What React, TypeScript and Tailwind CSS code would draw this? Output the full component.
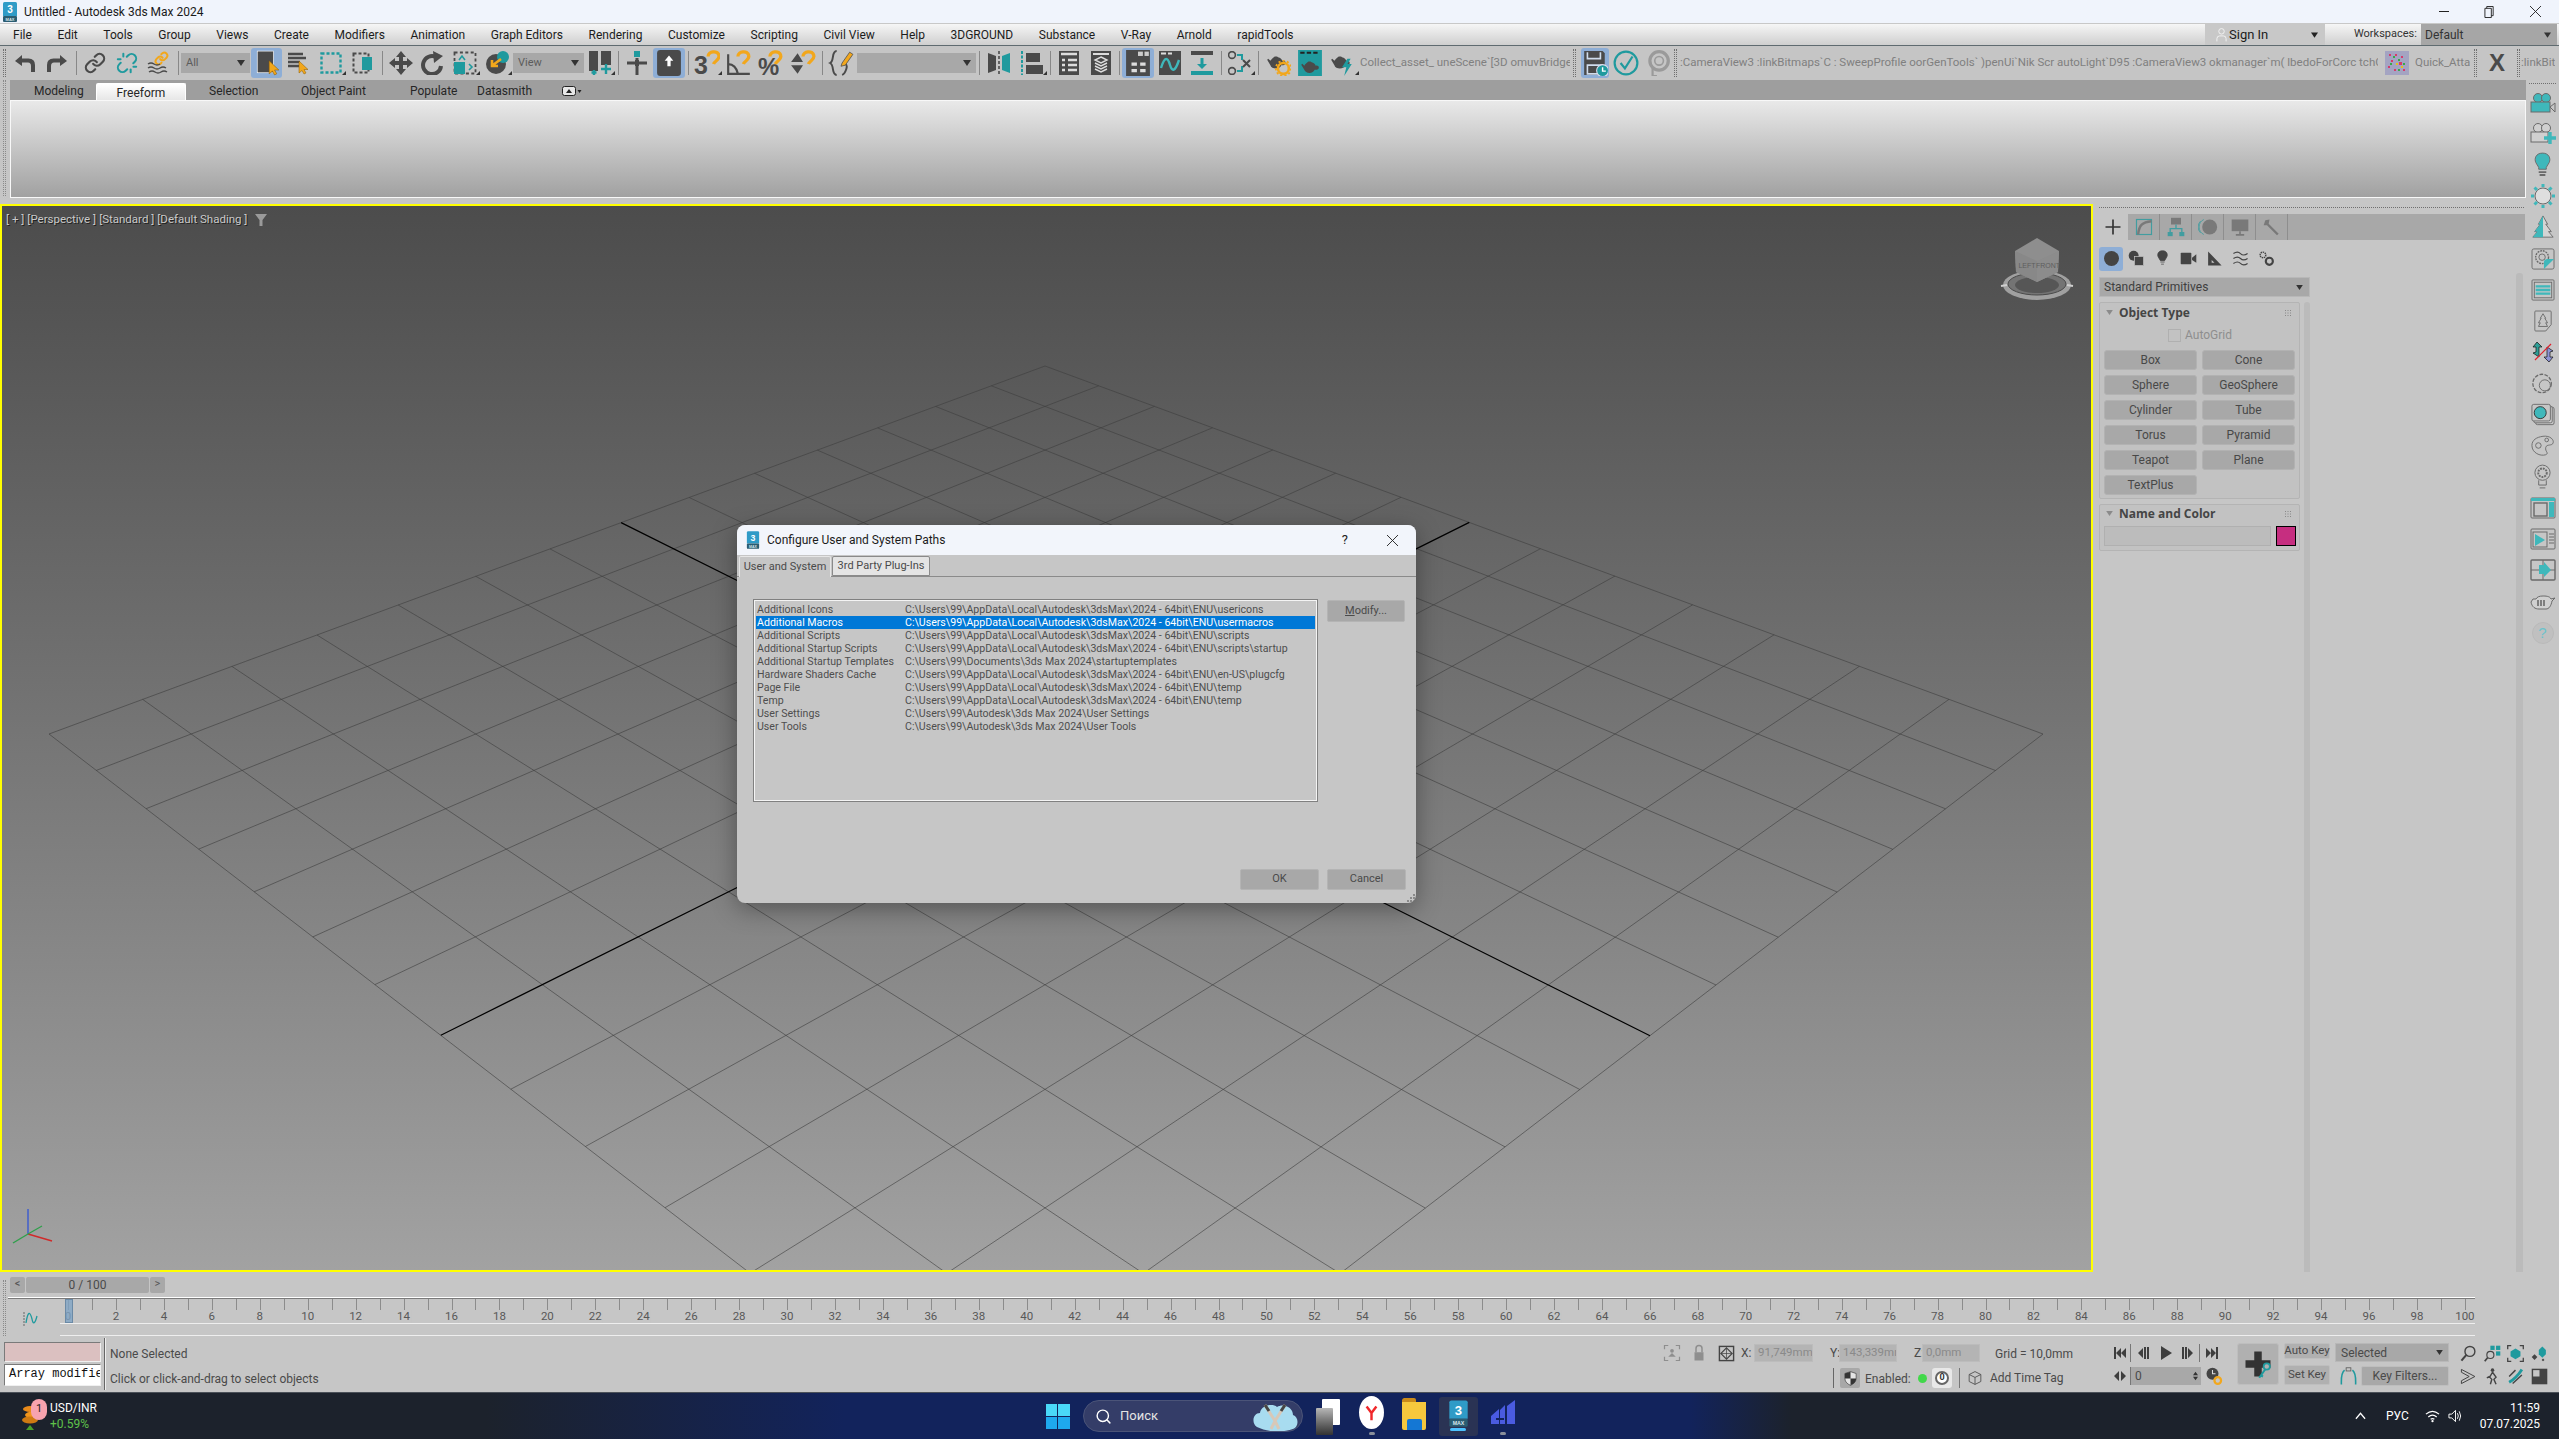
import React from "react";
import { Link, Unlink, Search } from "lucide-react";

const D = "#4a4a4a", T = "#1f9a9e", O = "#f2a71c", L = "#3fb8bb", G = "#6a6a6a";

const Ic = ({ children, c = "w-6 h-6" }: { children: React.ReactNode; c?: string }) => (
  <svg viewBox="0 0 24 24" className={c} fill="none">{children}</svg>
);
const Cursor = ({ x = 13, y = 11 }: { x?: number; y?: number }) => (
  <path transform={`translate(${x} ${y})`} d="M0 0 L0 12 L3 9.5 L5 13 L7 12 L5 8.5 L9 8.5 Z" fill={O} stroke="#8a5a00" strokeWidth=".5" />
);
const Magnet = ({ x = 11, y = 0 }: { x?: number; y?: number }) => (
  <path transform={`translate(${x} ${y})`} d="M1 6 C1 1 10 0 11 5 C12 9 7 10 6 13" stroke={O} strokeWidth="3" />
);
const Teapot = ({ f = D }: { f?: string }) => (
  <path d="M5 10 L3 8 L2 9 L5 14 C6 18 14 18 15 14 L17 14 C20 14 20 9 16 10 C15 7 12 7 11 6 L9 6 C8 7 6 8 5 10Z" fill={f} />
);

const toolbarIcons: Record<string, React.ReactNode> = {
  undo: <Ic><path d="M9 4 L2 10 L9 15 V11.5 H15 Q18 11.5 18 15 V21 H22 V14 Q22 7.5 15.5 7.5 H9Z" fill={D} /></Ic>,
  redo: <Ic c="w-6 h-6 -scale-x-100"><path d="M9 4 L2 10 L9 15 V11.5 H15 Q18 11.5 18 15 V21 H22 V14 Q22 7.5 15.5 7.5 H9Z" fill={D} /></Ic>,
  link: <Link className="w-[22px] h-[22px] text-[#4a4a4a]" strokeWidth={2.4} />,
  unlink: <Unlink className="w-[22px] h-[22px] text-[#1f9a9e]" strokeWidth={2.2} />,
  bind: <Ic><g transform="translate(7 0) scale(.62)" stroke={O} strokeWidth="3.2" strokeLinecap="round"><path d="M10 13a5 5 0 0 0 7.5.5l3-3a5 5 0 0 0-7-7l-1.7 1.7" /><path d="M14 11a5 5 0 0 0-7.5-.5l-3 3a5 5 0 0 0 7 7l1.7-1.7" /></g><path d="M1 13 q3-2 6 0 t6 0 M1 17 q3-2 6 0 t6 0 t6 0 M2 21 q3-2 6 0 t6 0 t6 0" stroke={D} strokeWidth="1.5" /></Ic>,
  select: <Ic c="w-[26px] h-[26px]"><rect x="3" y="1" width="15" height="20" fill={D} stroke="#fff" strokeWidth=".6" /><Cursor x={14} y={10} /></Ic>,
  byname: <Ic><path d="M2 3h15M2 7h18M2 11h12M2 15h11" stroke={D} strokeWidth="2.4" /><Cursor x={13} y={10} /></Ic>,
  rect: <Ic><rect x="2.5" y="2.5" width="19" height="19" stroke={T} strokeWidth="2.4" strokeDasharray="3 2" /></Ic>,
  win: <Ic><rect x="2.5" y="2.5" width="15" height="19" stroke={D} strokeWidth="2" strokeDasharray="3 2" /><rect x="11" y="6" width="10" height="13" fill={T} /></Ic>,
  move: <Ic><path d="M12 0 L17 6 H14 V10 H18 V7 L24 12 L18 17 V14 H14 V18 H17 L12 24 L7 18 H10 V14 H6 V17 L0 12 L6 7 V10 H10 V6 H7Z" fill={D} /></Ic>,
  rotate: <Ic><path d="M15 6 A9 9 0 1 0 20 15" stroke={D} strokeWidth="4" /><path d="M12 0 L22 5 L13 12Z" fill={D} /></Ic>,
  scale: <Ic><rect x="1.5" y="1.5" width="21" height="21" stroke={D} strokeWidth="1.8" strokeDasharray="3 2.4" /><rect x="1" y="11" width="11" height="12" fill={T} /><path d="M6 9 L9 5 L12 9 M16 13 L19 16 L16 19" stroke={T} strokeWidth="1.6" /></Ic>,
  place: <Ic><circle cx="11" cy="13" r="10" fill={D} /><circle cx="18" cy="6" r="6" fill={T} /><path d="M16 8 L8 14 M7 9 V15 H13" stroke={O} strokeWidth="2.6" /></Ic>,
  pivot: <Ic><rect x="1" y="0" width="9" height="20" fill={D} /><rect x="13" y="0" width="10" height="14" fill={D} /><path d="M18 13 V23 M13 18 H23 M6 19 V24 M3.5 21.5 H8.5" stroke={T} strokeWidth="2.4" /></Ic>,
  manip: <Ic><rect x="9" y="0" width="6" height="6" fill={T} /><rect x="10" y="9" width="4" height="6" fill={D} /><path d="M2 12 H22 M12 7 V24" stroke={D} strokeWidth="3" /></Ic>,
  up: <Ic c="w-[26px] h-[26px]"><rect x="1" y="0" width="22" height="24" rx="3" fill={D} /><path d="M12 5 L16 10 H13.5 V15 H10.5 V10 H8Z" fill="#fff" /></Ic>,
  s3: <Ic c="w-[26px] h-[26px]"><text x="0" y="22" fontSize="23" fontWeight="700" fontFamily="Liberation Sans" fill={D}>3</text><Magnet x={12} y={0} /></Ic>,
  sa: <Ic c="w-[26px] h-[26px]"><path d="M2 4 V22 H22 M2 13 Q9 13 11 22" stroke={D} strokeWidth="2" /><Magnet x={10} y={0} /></Ic>,
  sp: <Ic c="w-[26px] h-[26px]"><text x="0" y="23" fontSize="22" fontWeight="700" fontFamily="Liberation Sans" fill={D}>%</text><Magnet x={10} y={0} /></Ic>,
  ss: <Ic c="w-[26px] h-[26px]"><path d="M1 11 L7 3 L12 11Z M1 14 H12 L7 22Z" fill={D} /><Magnet x={11} y={0} /></Ic>,
  curly: <Ic c="w-[26px] h-[26px]"><path d="M8 1 C3 1 6 10 2 12 C6 14 3 23 8 23 M16 13 C19 14 16 22 13 23" stroke={D} strokeWidth="1.8" /><path d="M13 12 L20 2 L23 4 L16 14 L12 15Z" fill={O} stroke={D} strokeWidth=".7" /></Ic>,
  mirror: <Ic><path d="M1 2 L9 5 V19 L1 22Z" fill={D} /><path d="M23 2 L15 5 V19 L23 22Z" fill={T} /><path d="M12 0 V24" stroke={D} strokeWidth="1.6" strokeDasharray="3 2" /></Ic>,
  align: <Ic><path d="M2 0 V24" stroke={T} strokeWidth="2" strokeDasharray="3 1.5" /><rect x="6" y="2" width="14" height="9" fill={D} /><rect x="6" y="14" width="17" height="9" fill={D} /></Ic>,
  layer: <Ic><rect x="2" y="0" width="20" height="24" fill={D} /><path d="M4 3 H20 M5 9 H8 M11 9 H20 M5 14 H8 M11 14 H20 M5 19 H8 M11 19 H20" stroke="#ddd" strokeWidth="2.4" /></Ic>,
  scene: <Ic><rect x="2" y="0" width="20" height="24" fill={D} /><path d="M4 3 H20" stroke="#ddd" strokeWidth="2" /><path d="M12 6 L18 9 L12 12 L6 9Z M6 12 L12 15 L18 12 M6 15 L12 18 L18 15 M6 18 L12 21 L18 18" stroke="#ddd" strokeWidth="1.4" /></Ic>,
  hlgrid: <Ic c="w-[26px] h-[26px]"><rect x="1" y="0" width="22" height="24" fill={D} /><rect x="12" y="1.5" width="4.5" height="4" fill="#ccc" /><rect x="18" y="1.5" width="4" height="4" fill="#ccc" /><path d="M6 13 H11 M14 13 H19 M6 19 H11 M14 19 H19" stroke="#ddd" strokeWidth="3" /></Ic>,
  curve: <Ic><rect x="1" y="0" width="22" height="24" fill={D} /><path d="M3 2.5 H8 M10 2.5 H14" stroke="#ddd" strokeWidth="2" /><path d="M3 17 C7 4 10 7 12 14 C14 21 17 21 21 9" stroke={L} strokeWidth="2.4" /></Ic>,
  dl: <Ic><rect x="1" y="0" width="22" height="4" fill={D} /><path d="M12 7 V14" stroke={T} strokeWidth="3" /><path d="M7 13 H17 L12 18Z" fill={T} /><rect x="1" y="20" width="22" height="4" fill={T} /></Ic>,
  nodes: <Ic><circle cx="4" cy="4" r="3.4" stroke={D} strokeWidth="1.6" /><circle cx="4" cy="20" r="3.4" stroke={D} strokeWidth="1.6" /><path d="M9 4 H14 V9 M9 20 H14 V15" stroke={T} strokeWidth="2" /><path d="M15 9 L22 16 M22 9 L15 16" stroke={D} strokeWidth="2" /></Ic>,
  t1: <Ic c="w-[26px] h-[26px]"><Teapot /><circle cx="17" cy="17" r="5" stroke={O} strokeWidth="2.4" /><circle cx="17" cy="17" r="7" stroke={O} strokeWidth="1.6" strokeDasharray="2 2" /></Ic>,
  t2: <Ic c="w-[26px] h-[26px]"><rect x="1" y="0" width="22" height="24" fill={T} /><path d="M3 2.5 H7 M9 2.5 H13 M15 2.5 H19" stroke="#222" strokeWidth="2" /><g transform="translate(2 5) scale(.95)"><Teapot /></g></Ic>,
  t3: <Ic c="w-[26px] h-[26px]"><Teapot /><path d="M17 8 L12 16 H16 L14 24 L21 13 H17 L20 8Z" fill={T} /></Ic>,
  save: <Ic c="w-[26px] h-[26px]"><path d="M2 1 H19 L21 3 V23 H2Z" fill={D} /><path d="M5 2 V8 H17 V2 M5 14 H18 V22 H5Z" stroke="#cfdcec" strokeWidth="1.5" /><circle cx="19" cy="19" r="5.5" fill={T} stroke="#dde" /><path d="M19 16 V19.5 H22" stroke="#fff" strokeWidth="1.3" /></Ic>,
  check: <Ic c="w-[26px] h-[26px]"><circle cx="12" cy="12" r="10.5" stroke={T} strokeWidth="2" /><path d="M7 12 L11 17 L18 6" stroke={T} strokeWidth="2" /></Ic>,
  clock: <Ic c="w-[26px] h-[26px]"><circle cx="13" cy="10" r="8.5" stroke="#9a9a9a" strokeWidth="3" /><circle cx="13" cy="10" r="4" stroke="#9a9a9a" strokeWidth="1.5" /><path d="M7 16 V24 H11" stroke="#9a9a9a" strokeWidth="2" /></Ic>,
};

const Flyout = () => (
  <svg viewBox="0 0 4 4" className="absolute right-[1px] bottom-[3px] w-1 h-1"><path d="M4 0 V4 H0Z" fill="#333" /></svg>
);
const Btn = ({ n, fly, hl, w }: { n: string; fly?: boolean; hl?: boolean; w?: string }) => (
  <div className={`relative flex items-center justify-center shrink-0 h-[30px] ${w ?? "w-8"} ${hl ? "bg-[#8eaed6] rounded-[3px]" : ""}`}>
    {toolbarIcons[n]}
    {fly && <Flyout />}
  </div>
);
const Sep = ({ w = "w-[6px]" }: { w?: string }) => (
  <div className={`flex justify-center shrink-0 ${w}`}><div className="w-px h-[24px] bg-[#888888]" /></div>
);
const Dots = () => <div className="w-[3px] h-[28px] border-x border-dotted border-[#6f6f6f] shrink-0" />;
const Combo = ({ label, w }: { label: string; w: string }) => (
  <div className={`flex items-center justify-between shrink-0 h-[20px] px-[5px] bg-[#a8a8a8] text-[11px] text-[#5c5c5c] ${w}`}>
    <span>{label}</span>
    <svg viewBox="0 0 8 6" className="w-2 h-[6px]"><path d="M0 0 H8 L4 6Z" fill="#333" /></svg>
  </div>
);

const menus = ["File", "Edit", "Tools", "Group", "Views", "Create", "Modifiers", "Animation", "Graph Editors", "Rendering", "Customize", "Scripting", "Civil View", "Help", "3DGROUND", "Substance", "V-Ray", "Arnold", "rapidTools"];

const MaxIcon = ({ c }: { c: string }) => (
  <svg viewBox="0 0 16 20" className={c}>
    <path d="M1 1.5 Q1 0 2.5 0 H13.5 Q15 0 15 1.5 V14 H1Z" fill="#2f9bc7" />
    <rect x="1" y="14" width="14" height="6" rx="1" fill="#2b5d72" />
    <text x="8" y="11" textAnchor="middle" fontSize="10" fontWeight="700" fontFamily="Liberation Sans" fill="#fff">3</text>
    <text x="8" y="18.6" textAnchor="middle" fontSize="4" fontWeight="700" fontFamily="Liberation Sans" fill="#d7e6ee">MAX</text>
  </svg>
);

function TitleBar() {
  return (
    <div className="flex items-center h-[24px] bg-[#f0f4fc] border-b border-[#c8c8c8] text-[12px] text-[#1a1a1a]">
      <MaxIcon c="w-[16px] h-[20px] ml-[2px] mr-[6px]" />
      <span>Untitled - Autodesk 3ds Max 2024</span>
      <div className="ml-auto flex items-center text-[#222222]">
        <span className="w-[46px] flex justify-center"><span className="w-[10px] h-px bg-[#222222]" /></span>
        <svg viewBox="0 0 12 14" className="w-[11px] h-[14px] mx-[17px] mr-[35px]"><path d="M3 3 V1 H10 V11 H8 M1 3 H8 V13 H1Z" fill="none" stroke="#222" /></svg>
        <svg viewBox="0 0 12 12" className="w-[11px] h-[11px] mr-[18px]"><path d="M0 0 L12 12 M12 0 L0 12" stroke="#222" /></svg>
      </div>
    </div>
  );
}

function MenuBar() {
  return (
    <div className="flex items-center h-[22px] bg-gradient-to-b from-[#f6f6f6] to-[#cfcfcf] border-b border-[#5f6b70] text-[12px] text-[#1c1c1c]">
      <div className="flex gap-[25.6px] pl-[13px]">
        {menus.map((m) => <span key={m}>{m}</span>)}
      </div>
      <div className="ml-auto flex items-center h-full">
        <div className="flex items-center w-[120px] h-full bg-[#c8c8c8] relative pl-[11px]">
          <svg viewBox="0 0 12 16" className="w-[11px] h-[16px] mr-[2px]"><circle cx="6" cy="4" r="3" fill="none" stroke="#f4f4f4" /><path d="M1 15 V12 Q1 9 4 9 H8 Q11 9 11 12 V15" fill="none" stroke="#f4f4f4" /></svg>
          <span className="text-[13px]">Sign In</span>
          <svg viewBox="0 0 8 6" className="w-[7px] h-[6px] absolute right-[7px]"><path d="M0 0 H8 L4 6Z" fill="#222" /></svg>
        </div>
        <span className="ml-[29px] w-[62px] whitespace-nowrap text-[11px] text-[#333333]">Workspaces:</span>
        <div className="flex items-center justify-between ml-[5px] mr-[2px] w-[136px] h-full bg-[#a6a6a6] pl-[4px] pr-[6px] text-[12px] text-[#333333]">
          <span>Default</span>
          <svg viewBox="0 0 8 6" className="w-[7px] h-[6px]"><path d="M0 0 H8 L4 6Z" fill="#333" /></svg>
        </div>
      </div>
    </div>
  );
}

function Toolbar() {
  const txt = "shrink-0 overflow-hidden text-[11.5px] text-[#808080]";
  return (
    <div className="flex items-center h-[34px] bg-[#c5c5c5] whitespace-nowrap overflow-hidden">
      <div className="ml-[3px] mr-[3px]"><Dots /></div>
      <Btn n="undo" /><Btn n="redo" /><Sep /><Btn n="link" /><Btn n="unlink" /><Btn n="bind" /><Sep />
      <Combo label="All" w="w-[69px]" />
      <div className="w-px shrink-0" />
      <Btn n="select" hl w="w-[31px]" /><Btn n="byname" /><Btn n="rect" w="w-[33px]" fly /><Btn n="win" /><Sep />
      <Btn n="move" /><Btn n="rotate" /><Btn n="scale" fly /><Btn n="place" fly />
      <Combo label="View" w="w-[71px]" />
      <Btn n="pivot" fly /><Sep w="w-[5px]" /><Btn n="manip" /><Btn n="up" hl /><Sep />
      <Btn n="s3" fly /><Btn n="sa" /><Btn n="sp" /><Btn n="ss" /><Sep /><Btn n="curly" />
      <Combo label="" w="w-[119px]" />
      <Sep w="w-[7px]" /><Btn n="mirror" /><Btn n="align" fly w="w-[33px]" /><Sep w="w-[5px]" /><Btn n="layer" /><Btn n="scene" /><Sep w="w-[5px]" />
      <Btn n="hlgrid" hl /><Btn n="curve" /><Btn n="dl" /><Sep /><Btn n="nodes" fly /><Sep w="w-[5px]" /><Btn n="t1" w="w-[34px]" /><Btn n="t2" w="w-[29px]" /><Btn n="t3" fly w="w-[36px]" />
      <div className={`w-[210px] ${txt}`}>Collect_asset_ uneScene`[3D omuvBridge`T</div>
      <div className="ml-[3px] shrink-0"><Dots /></div>
      <div className="w-[5px] shrink-0" /><Btn n="save" hl w="w-[28px]" /><Btn n="check" w="w-[33px]" /><Btn n="clock" w="w-[32px]" />
      <Dots />
      <div className={`w-[698px] ml-[3px] ${txt}`}>:CameraView3 :linkBitmaps`C : SweepProfile oorGenTools` )penUi`Nik Scr autoLight`D95 :CameraView3 okmanager`m( lbedoForCorc tchGenerator`</div>
      <svg viewBox="0 0 24 24" className="w-[24px] h-[24px] ml-[7px] shrink-0"><rect width="24" height="24" fill="#a4a4c2" /><path d="M4 3h2v2H4zM10 3h2v2h-2zM16 5h2v2h-2zM6 9h2v2H6zM14 11h3v3h-3zM3 15h2v2H3zM9 18h2v2H9zM18 18h2v2h-2z" fill="#d63b6b" /><path d="M8 5h2v2H8zM13 8h2v2h-2zM18 12h2v2h-2zM5 12h2v2H5zM13 18h2v2h-2z" fill="#38a84b" /><path d="M11 12h2v2h-2zM16 15h2v2h-2z" fill="#e5c21b" /></svg>
      <div className={`w-[55px] ml-[6px] ${txt}`}>Quick_Attach</div>
      <div className="ml-[4px] shrink-0"><Dots /></div>
      <div className="w-[40px] shrink-0 flex justify-center text-[24px] leading-none font-bold text-[#4a4a4a] font-['Liberation_Sans']">X</div>
      <Dots />
      <div className={`ml-[1px] ${txt}`}>:linkBit</div>
    </div>
  );
}

function Ribbon() {
  return (
    <div className="relative">
      <div className="flex h-[20px]">
        <div className="w-[10px] bg-[#c5c5c5]" />
        <div className="flex-1 bg-[#9e9e9e] flex items-end text-[12px] text-[#262626]">
          <span className="ml-[24px] w-[62px] h-full pt-[1px] flex items-center">Modeling</span>
          <span className="w-[90px] h-[17px] pt-[1px] flex items-center justify-center bg-gradient-to-b from-[#ffffff] to-[#e6e6e6] border-x border-t border-[#ffffff] rounded-t-[2px]">Freeform</span>
          <span className="ml-[23px] w-[92px] h-full pt-[1px] flex items-center">Selection</span>
          <span className="w-[109px] h-full pt-[1px] flex items-center">Object Paint</span>
          <span className="w-[67px] h-full pt-[1px] flex items-center">Populate</span>
          <span className="w-[85px] h-full pt-[1px] flex items-center">Datasmith</span>
          <span className="h-full pt-[1px] flex items-center">
            <svg viewBox="0 0 20 10" className="w-[20px] h-[10px]"><rect x=".5" y=".5" width="13" height="9" rx="2" fill="#e8e8e8" stroke="#222" /><path d="M7 3 L10 7 H4Z" fill="#222" /><path d="M15.5 4 H19.5 L17.5 7Z" fill="#222" /></svg>
          </span>
        </div>
      </div>
      <div className="flex h-[98px]">
        <div className="w-[10px] bg-[#c5c5c5]" />
        <div className="flex-1 border border-[#f8f8f8] bg-gradient-to-b from-[#e9e9e9] to-[#a1a1a1]" />
      </div>
      <div className="absolute left-[3px] top-[0px] w-[3px] h-[116px] border-x border-dotted border-[#8a8a8a]" />
    </div>
  );
}

function buildGrid() {
  const [x0, y0, x1, y1, x2, y2, x3, y3] = [1045, 366, 2043, 734, 1045, 1500, 49, 734];
  const dx1 = x1 - x2, dx2 = x3 - x2, sx = x0 - x1 + x2 - x3;
  const dy1 = y1 - y2, dy2 = y3 - y2, sy = y0 - y1 + y2 - y3;
  const den = dx1 * dy2 - dx2 * dy1;
  const g = (sx * dy2 - dx2 * sy) / den, h = (dx1 * sy - sx * dy1) / den;
  const a = x1 - x0 + g * x1, b = x3 - x0 + h * x3, c = x0;
  const d = y1 - y0 + g * y1, e = y3 - y0 + h * y3, f = y0;
  const p = (u: number, v: number) => {
    const w = g * u + h * v + 1;
    return `${((a * u + b * v + c) / w).toFixed(1)} ${((d * u + e * v + f) / w).toFixed(1)}`;
  };
  let thin = "", thick = "";
  const n = 14;
  for (let i = 0; i <= n; i++) {
    const t = i / n;
    const s = `M${p(t, 0)} L${p(t, 1)} M${p(0, t)} L${p(1, t)} `;
    if (i === 7) thick += s; else thin += s;
  }
  return { thin, thick };
}
const grid = buildGrid();

function ViewCube() {
  return (
    <svg viewBox="0 0 80 70" className="absolute left-[1995px] top-[29px] w-[80px] h-[70px]">
      <ellipse cx="40" cy="50" rx="34" ry="15" fill="#a0a0a0" />
      <ellipse cx="40" cy="49" rx="29" ry="11" fill="#747474" stroke="#4a4a4a" strokeWidth="1" />
      <ellipse cx="40" cy="50" rx="22" ry="8" fill="#565656" />
      <path d="M10 50 L4 51 M70 50 L76 51" stroke="#cfcfcf" strokeWidth="2" />
      <path d="M40 3 L62 16 L61 37 L40 47 L19 37 L18 16Z" fill="#8e8e8e" />
      <path d="M40 26 L62 16 L61 37 L40 47Z" fill="#8c8c8c" />
      <path d="M40 26 L18 16 L19 37 L40 47Z" fill="#888888" />
      <text x="30" y="33" fontSize="7" textAnchor="middle" fill="#5e5e5e" fontFamily="Liberation Sans">LEFT</text>
      <text x="51" y="33" fontSize="7" textAnchor="middle" fill="#5e5e5e" fontFamily="Liberation Sans">FRONT</text>
    </svg>
  );
}

function Viewport() {
  return (
    <div className="relative w-[2093px] h-[1068px] border-2 border-[#ffff00] bg-gradient-to-b from-[#4c4c4c] to-[#a2a2a2] overflow-hidden">
      <svg viewBox="2 206 2089 1064" className="absolute left-0 top-0 w-[2089px] h-[1064px]">
        <path d={grid.thin} stroke="#3e3e3e" strokeOpacity=".6" strokeWidth="1" fill="none" />
        <path d={grid.thick} stroke="#000000" strokeWidth="1.2" fill="none" />
      </svg>
      <div className="absolute left-[4px] top-[5px] flex items-center gap-[3px] text-[11.5px] text-[#c9c9c9] [text-shadow:1px_1px_0_#222]">
        <span>[ + ]</span><span>[Perspective ]</span><span>[Standard ]</span><span>[Default Shading ]</span>
        <svg viewBox="0 0 12 12" className="w-[12px] h-[12px] ml-[5px]"><path d="M0 0 H12 L7.5 6 V12 H4.5 V6Z" fill="#9a9a9a" /></svg>
      </div>
      <ViewCube />
      <svg viewBox="0 0 50 40" className="absolute left-[6px] bottom-[24px] w-[50px] h-[40px]">
        <path d="M20 28 V3" stroke="#3a5ad0" strokeWidth="1.4" />
        <path d="M20 28 L44 35" stroke="#d02a2a" strokeWidth="1.4" />
        <path d="M20 28 L5 37" stroke="#2ea04a" strokeWidth="1.4" />
        <path d="M20 28 L34 20" stroke="#2ea04a" strokeWidth="1.2" />
      </svg>
    </div>
  );
}

const IconBox = ({ children, c = "w-[32px]" }: { children: React.ReactNode; c?: string }) => (
  <div className={`flex items-center justify-center h-full ${c}`}>{children}</div>
);

function CommandPanel() {
  const buttons = ["Box", "Cone", "Sphere", "GeoSphere", "Cylinder", "Tube", "Torus", "Pyramid", "Teapot", "Plane", "TextPlus"];
  const Grip = () => (
    <svg viewBox="0 0 6 6" className="w-[6px] h-[6px] ml-auto mr-[8px]"><path d="M0 0h1v1H0zM2.5 0h1v1h-1zM5 0h1v1H5zM0 2.5h1v1H0zM2.5 2.5h1v1h-1zM5 2.5h1v1H5zM0 5h1v1H0zM2.5 5h1v1h-1zM5 5h1v1H5z" fill="#888" /></svg>
  );
  const Tri = () => (
    <svg viewBox="0 0 8 6" className="w-[7px] h-[5px] mr-[6px]"><path d="M0 0 H8 L4 6Z" fill="#8a8a8a" /></svg>
  );
  const sm = "w-[17px] h-[17px]";
  const tabI = "w-[20px] h-[20px] opacity-75";
  return (
    <div className="w-[433px] h-[1068px] bg-[#c6c6c6] flex flex-col pl-[6px] text-[#4a4a4a]">
      <div className="mt-[3px] h-px w-[425px] border-t border-dotted border-[#6f6f6f]" />
      <div className="mt-[6px] flex items-center h-[26px] w-[427px] -ml-px bg-[#a8a8a8]">
        <div className="w-[30px] h-full bg-[#c6c6c6] flex items-center justify-center">
          <Ic c="w-[20px] h-[20px]"><path d="M12 3 V21 M3 12 H21" stroke="#333" strokeWidth="2" /></Ic>
        </div>
        <IconBox c="w-[32px] border-r border-[#8e8e8e]"><Ic c={tabI}><rect x="3" y="3" width="18" height="18" stroke={T} strokeWidth="1.4" /><path d="M5 21 C6 10 10 6 21 5" stroke={G} strokeWidth="3" /></Ic></IconBox>
        <IconBox c="w-[32px] border-r border-[#8e8e8e]"><Ic c={tabI}><rect x="6" y="1" width="12" height="8" fill={G} /><path d="M12 9 V14 M5 19 V14 H19 V19" stroke={T} strokeWidth="1.6" /><rect x="2" y="18" width="6" height="5" fill={T} /><rect x="16" y="18" width="6" height="5" fill={T} /></Ic></IconBox>
        <IconBox c="w-[32px] border-r border-[#8e8e8e]"><Ic c={tabI}><circle cx="14" cy="12" r="9" fill={G} /><path d="M7 3 A10 10 0 0 0 7 21 M3 5 A10 10 0 0 0 3 19" stroke={T} strokeWidth="1" /></Ic></IconBox>
        <IconBox c="w-[32px] border-r border-[#8e8e8e]"><Ic c={tabI}><rect x="2" y="3" width="20" height="14" fill={G} /><path d="M12 17 V21 M7 21.5 H17" stroke={G} strokeWidth="2" /></Ic></IconBox>
        <IconBox c="w-[32px] border-r border-[#8e8e8e]"><Ic c={tabI}><path d="M4 4 L9 3 L8 8 L20 20 L18 22 L6 10 L2 10Z" fill={G} /></Ic></IconBox>
      </div>
      <div className="mt-[6px] flex items-center h-[25px] w-[180px]">
        <div className="w-[24px] h-[24px] bg-[#8eaed6] rounded-[3px] flex items-center justify-center"><span className="w-[15px] h-[15px] rounded-full bg-[#444444]" /></div>
        <div className="w-[26px] flex justify-center"><Ic c={sm}><circle cx="8" cy="8" r="7" fill="#444" /><rect x="9" y="9" width="13" height="13" fill="#444" stroke="#c6c6c6" /></Ic></div>
        <div className="w-[26px] flex justify-center"><Ic c={sm}><path d="M12 1 C18 1 20 6 18 10 L15 15 H9 L6 10 C4 6 6 1 12 1Z M9 17 H15 M10 20 H14" fill="#444" stroke="#444" /></Ic></div>
        <div className="w-[26px] flex justify-center"><Ic c={sm}><rect x="1" y="4" width="15" height="16" rx="1" fill="#444" /><path d="M17 11 L23 6 V18 L17 14Z" fill="#444" /></Ic></div>
        <div className="w-[26px] flex justify-center"><Ic c={sm}><path d="M3 2 L22 22 H3Z M8 14 V18 H12Z" fill="#444" fillRule="evenodd" /></Ic></div>
        <div className="w-[26px] flex justify-center"><Ic c={sm}><path d="M2 5 Q8 1 12 5 T22 5 M2 12 Q8 8 12 12 T22 12 M2 19 Q8 15 12 19 T22 19" stroke="#444" strokeWidth="1.6" /></Ic></div>
        <div className="w-[26px] flex justify-center"><Ic c={sm}><circle cx="7" cy="7" r="4" stroke="#444" strokeWidth="2" strokeDasharray="2 1" /><circle cx="16" cy="16" r="5" stroke="#444" strokeWidth="3" /></Ic></div>
      </div>
      <div className="flex flex-1 mt-[2px] relative">
        <div className="w-[211px] flex flex-col">
          <div className="mt-[4px] flex items-center justify-between h-[20px] pl-[4px] pr-[6px] bg-[#a8a8a8] border border-[#b8b8b8] text-[12px] text-[#3e3e3e]">
            <span>Standard Primitives</span>
            <svg viewBox="0 0 8 6" className="w-[7px] h-[5px]"><path d="M0 0 H8 L4 6Z" fill="#333" /></svg>
          </div>
          <div className="flex mt-[5px] flex-1">
            <div className="w-[201px]">
              <div className="h-[197px] border border-[#b4b4b4] rounded-[2px] px-[4px] bg-[#c2c2c2]">
                <div className="flex items-center h-[19px] mb-[2px] -mx-[4px] pl-[6px]">
                  <Tri /><span className="font-bold text-[12px] text-[#454545] font-['Open_Sans']">Object Type</span><Grip />
                </div>
                <div className="flex items-center h-[22px] pl-[64px]">
                  <span className="w-[13px] h-[13px] border border-[#b0b0b0] mr-[4px]" />
                  <span className="text-[12px] text-[#8e8e8e]">AutoGrid</span>
                </div>
                <div className="grid grid-cols-2 gap-x-[5px] gap-y-[5px] w-[191px] mt-[4px]">
                  {buttons.map((b) => (
                    <div key={b} className="h-[20px] flex items-center justify-center rounded-[3px] bg-[#a8a8a8] border border-[#b2b2b2] text-[12px] text-[#484848]">{b}</div>
                  ))}
                </div>
              </div>
              <div className="mt-[5px] h-[47px] border border-[#b4b4b4] rounded-[2px] bg-[#c2c2c2]">
                <div className="flex items-center h-[17px] pl-[6px]">
                  <Tri /><span className="font-bold text-[12px] text-[#454545] font-['Open_Sans']">Name and Color</span><Grip />
                </div>
                <div className="flex items-center pl-[4px] mt-[4px]">
                  <div className="w-[167px] h-[20px] bg-[#bcbcbc] border border-[#b0b0b0]" />
                  <div className="ml-[5px] w-[20px] h-[20px] bg-[#c62e80] border border-black" />
                </div>
              </div>
            </div>
            <div className="ml-[4px] w-[6px] bg-[#bbbbbb] rounded-t-[3px]" />
          </div>
        </div>
        <div className="ml-auto mr-[3px] w-[7px] bg-[#bbbbbb] rounded-t-[3px]" />
      </div>
    </div>
  );
}

const sideIcons: React.ReactNode[] = [
  <svg key="1" viewBox="0 0 26 20" className="w-[26px] h-[20px]"><circle cx="8" cy="5" r="4.5" fill={L} stroke={G} /><circle cx="16" cy="5" r="4.5" fill={L} stroke={G} /><rect x="1" y="9" width="19" height="10" fill={L} stroke={G} /><path d="M20 14 L25 10 V19Z" fill="none" stroke={G} /></svg>,
  <svg key="2" viewBox="0 0 26 22" className="w-[26px] h-[22px]"><circle cx="8" cy="5" r="4.5" fill="#d0d0d0" stroke={G} /><circle cx="16" cy="5" r="4.5" fill="#d0d0d0" stroke={G} /><rect x="1" y="9" width="17" height="10" fill="#d0d0d0" stroke={G} /><path d="M20 9 V21 M14 15 H26" stroke={L} strokeWidth="3.4" /></svg>,
  <svg key="3" viewBox="0 0 20 26" className="w-[19px] h-[25px]"><path d="M10 1 C17 1 19 7 17 11 L14 16 V18 H6 V16 L3 11 C1 7 3 1 10 1Z" fill={L} stroke={G} /><path d="M6 21 H14 M7 24 H13" stroke={G} strokeWidth="2" /></svg>,
  <svg key="4" viewBox="0 0 26 26" className="w-[26px] h-[26px]"><circle cx="13" cy="13" r="8" fill="#dedede" stroke={G} /><path d="M13 1 V4 M13 22 V25 M1 13 H4 M22 13 H25 M4.5 4.5 L7 7 M19 19 L21.5 21.5 M4.5 21.5 L7 19 M19 7 L21.5 4.5" stroke={L} strokeWidth="3" /></svg>,
  <svg key="5" viewBox="0 0 26 26" className="w-[24px] h-[24px]"><path d="M13 1 L18 10 L16 10 L22 18 L19 18 L24 24 H2 L7 18 L4 18 L10 10 L8 10Z" fill="#d4d4d4" stroke={G} /><path d="M13 1 L8 10 L10 10 L4 18 L7 18 L2 24 H13Z" fill={L} /></svg>,
  <svg key="6" viewBox="0 0 26 24" className="w-[24px] h-[22px]"><rect x="1" y="1" width="24" height="22" rx="2" fill="none" stroke={G} /><circle cx="12" cy="10" r="7" fill="none" stroke={G} strokeWidth="1.5" strokeDasharray="2 1" /><circle cx="12" cy="10" r="3.5" fill="none" stroke={G} /><path d="M25 12 L14 23 V16 Q14 12 18 12Z" fill={L} /></svg>,
  <svg key="7" viewBox="0 0 26 24" className="w-[24px] h-[22px]"><rect x="1" y="1" width="24" height="22" rx="1" fill="none" stroke={G} /><rect x="3.5" y="3.5" width="19" height="17" fill="none" stroke={G} /><path d="M5 8 H21 M5 12 H21 M5 16 H21" stroke={L} strokeWidth="2.6" /></svg>,
  <svg key="8" viewBox="0 0 22 24" className="w-[20px] h-[22px]"><path d="M2 2 Q2 1 3 1 H19 Q20 1 20 2 V16 L14 23 H3 Q2 23 2 22Z" fill="none" stroke={G} /><path d="M11 4 L14 9 L13 9 L16 14 L14 14 L16 18 H6 L8 14 L6 14 L9 9 L8 9Z" fill="none" stroke={G} /></svg>,
  <svg key="9" viewBox="0 0 22 22" className="w-[22px] h-[22px]"><path d="M5 1 L10 6 H7 V16 L1 12 L4 11 V6 H1Z" fill="#2e9e96" stroke="#111" strokeWidth=".7" /><path d="M17 21 L12 16 H15 V6 L21 10 L18 11 V16 H21Z" fill="#8e94d4" stroke="#111" strokeWidth=".7" /><path d="M3 19 L19 3" stroke="#e0202a" strokeWidth="1.2" /></svg>,
  <svg key="10" viewBox="0 0 26 24" className="w-[24px] h-[23px]"><circle cx="12" cy="12" r="10" fill="none" stroke={G} strokeDasharray="4 1.5" strokeWidth="1.4" /><ellipse cx="15" cy="14" rx="6" ry="6" fill="none" stroke={G} /></svg>,
  <svg key="11" viewBox="0 0 26 24" className="w-[24px] h-[23px]"><rect x="5" y="4" width="20" height="19" rx="2" fill="none" stroke={G} /><rect x="3" y="3" width="20" height="18" rx="2" fill="#d0d0d0" stroke={G} /><rect x="1" y="1" width="20" height="18" rx="2" fill="#c6c6c6" stroke={G} /><circle cx="10" cy="10" r="6.5" fill={L} stroke="#333" /></svg>,
  <svg key="12" viewBox="0 0 26 24" className="w-[24px] h-[23px]"><path d="M13 2 C21 1 25 6 24 9 C23 13 17 10 16 14 C15 19 20 20 16 22 C10 24 1 20 1 12 C1 6 6 3 13 2Z" fill="none" stroke={G} /><circle cx="8" cy="12" r="3" fill="none" stroke={G} /><circle cx="17" cy="6" r="2" fill="none" stroke={G} /></svg>,
  <svg key="13" viewBox="0 0 20 26" className="w-[19px] h-[25px]"><circle cx="10" cy="9" r="8" fill="none" stroke={G} /><circle cx="10" cy="9" r="4.5" fill="none" stroke={G} strokeWidth="2" strokeDasharray="2 1" /><path d="M6 17 V22 H14 V17 M7 25 H13" fill="none" stroke={G} /></svg>,
  <svg key="14" viewBox="0 0 26 22" className="w-[26px] h-[22px]"><rect x="1" y="1" width="24" height="20" rx="1" fill="none" stroke={G} /><rect x="1" y="1" width="24" height="3" fill={L} /><rect x="4" y="6" width="13" height="13" fill="none" stroke={G} strokeWidth="1.4" /><rect x="19" y="5" width="5" height="15" fill={L} /></svg>,
  <svg key="15" viewBox="0 0 26 22" className="w-[26px] h-[22px]"><rect x="1" y="1" width="24" height="20" rx="1" fill="none" stroke={G} /><rect x="3" y="4" width="14" height="15" fill="none" stroke={G} /><path d="M5 6 L15 12 L5 18Z" fill={L} /><path d="M19 6 H24 M19 9 H24 M19 12 H24 M19 15 H24" stroke={G} /></svg>,
  <svg key="16" viewBox="0 0 26 22" className="w-[26px] h-[22px]"><rect x="1" y="1" width="24" height="20" rx="1" fill="none" stroke={G} strokeWidth="1.4" /><path d="M13 1 V21 M1 11 H25" stroke={G} /><path d="M9 6 H14 V3 L21 11 L14 18 V15 H9Z" fill={L} /></svg>,
  <svg key="17" viewBox="0 0 26 18" className="w-[26px] h-[18px]"><path d="M3 6 L1 9 C2 14 5 16 9 16 H16 C19 16 21 13 22 8 L25 5 L21 6 C20 3 15 3 13 3 C9 3 7 4 6 6Z" fill="#d0d0d0" stroke={G} /><path d="M8 7 V13 M11 7 V13 M14 7 V13" stroke={G} strokeWidth="1.6" /></svg>,
  <div key="18" className="w-[22px] h-[22px] rounded-full bg-[#c0c0c0] border border-[#bababa] flex items-center justify-center text-[15px] text-[#6cc3cc] font-['Liberation_Sans']">?</div>,
];

function RightBar() {
  return (
    <div className="w-[33px] flex flex-col items-center bg-[#c6c6c6]">
      <div className="mt-[3px] w-[27px] border-t border-dotted border-[#6f6f6f]" />
      <div className="flex flex-col items-center pt-[3px]">
        {sideIcons.map((ic, i) => (
          <div key={i} className="h-[31.2px] flex items-center justify-center">{ic}</div>
        ))}
      </div>
    </div>
  );
}

function Ruler() {
  const cells = Array.from({ length: 101 }, (_, i) => i);
  return (
    <div className="relative h-[26px] border-t border-white">
      <div className="border-t border-[#7a7a7a] h-[25px] flex pl-[60px]">
        {cells.map((i) => (
          <div key={i} className="relative w-[23.98px] shrink-0">
            <div className={`w-px bg-[#8c8c8c] ${i % 2 === 0 ? "h-[23px]" : "h-[11px]"}`} />
            {i % 2 === 0 && (
              <span className="absolute left-0 top-[11px] -translate-x-1/2 px-px bg-[#c6c6c6] text-[11.5px] leading-[13px] text-[#585858]">{i}</span>
            )}
          </div>
        ))}
      </div>
      <div className="absolute left-[57px] top-[1px] w-[8px] h-[24px] bg-[#7fa4c4]/80 border border-[#6b8aa6]" />
    </div>
  );
}

function TimeArea() {
  return (
    <div className="relative h-[64px]">
      <div className="h-[25px] flex items-center pl-[10px]">
        <div className="w-[15px] h-[16px] bg-[#a8a8a8] rounded-[2px] flex items-center justify-center text-[11px] text-[#555555]">&lt;</div>
        <div className="ml-px w-[123px] h-[16px] bg-[#a8a8a8] rounded-[2px] flex items-center justify-center text-[12px] text-[#4a4a4a]">0 / 100</div>
        <div className="ml-px w-[15px] h-[16px] bg-[#a8a8a8] rounded-[2px] flex items-center justify-center text-[11px] text-[#555555]">&gt;</div>
      </div>
      <div className="pl-[8px] pr-[84px]"><Ruler /></div>
      <div className="ml-[60px] mr-[84px] h-[12px] border-t border-[#eeeeee]" />
      <div className="ml-[60px] mr-[84px] border-t border-[#eeeeee]" />
      <svg viewBox="0 0 16 14" className="absolute left-[22px] top-[40px] w-[16px] h-[14px]"><path d="M1 1h2M1 4h2M1 7h2M1 10h2M1 13h2" stroke="#666" /><path d="M4 11 C6 -2 8 0 10 7 C11 13 13 12 15 4" stroke={T} strokeWidth="1.3" fill="none" /></svg>
      <div className="absolute left-[3px] top-[8px] h-[56px] w-[3px] border-x border-dotted border-[#8a8a8a]" />
    </div>
  );
}

const Field = ({ v, w, cls }: { v: string; w: string; cls?: string }) => (
  <div className={`h-[18px] flex items-center pl-[3px] bg-[#b4b4b4] border border-[#bcbcbc] text-[11.5px] text-[#8a8a8a] overflow-hidden whitespace-nowrap ${w} ${cls ?? ""}`}>{v}</div>
);
const Tx = ({ children }: { children: React.ReactNode }) => <span className="text-[12px] text-[#4a4a4a]">{children}</span>;

const nav: React.ReactNode[] = [
  <Ic key="a" c="w-[17px] h-[17px]"><circle cx="14" cy="9" r="7" stroke="#444" strokeWidth="2" /><path d="M9 14 L2 22" stroke="#444" strokeWidth="3" /></Ic>,
  <Ic key="b" c="w-[17px] h-[17px]"><circle cx="9" cy="14" r="5" stroke="#444" strokeWidth="1.6" /><path d="M5 18 L1 23" stroke="#444" strokeWidth="2.4" /><rect x="9" y="1" width="6" height="6" fill={T} /><rect x="17" y="1" width="6" height="6" fill={T} /><rect x="17" y="9" width="6" height="6" fill={T} /></Ic>,
  <Ic key="c" c="w-[17px] h-[17px]"><path d="M1 6 V1 H6 M18 1 H23 V6 M23 18 V23 H18 M6 23 H1 V18" stroke="#444" strokeWidth="1.8" /><path d="M12 5 L19 9 V16 L12 20 L5 16 V9Z" fill={T} /></Ic>,
  <Ic key="d" c="w-[17px] h-[17px]"><path d="M16 2 L21 7 V13 L16 18 L11 13 V7Z" fill={T} /><path d="M5 13 L9 17 L5 21 L1 17Z" fill="#444" /><path d="M17 19 L19 21 L17 23 L15 21Z" fill="#444" /></Ic>,
  <Ic key="e" c="w-[17px] h-[17px]"><path d="M2 2 L21 12 L2 22 V18 L13 12 L2 6Z" stroke="#444" strokeWidth="1.4" /></Ic>,
  <Ic key="f" c="w-[17px] h-[17px]"><circle cx="12" cy="3" r="2.5" fill="#444" /><path d="M12 6 L8 13 L11 16 L9 23 M12 6 L17 13 L14 16 L17 23 M8 12 L4 14" stroke="#444" strokeWidth="2" /></Ic>,
  <Ic key="g" c="w-[17px] h-[17px]"><path d="M3 20 C10 16 16 10 21 2" stroke={T} strokeWidth="4" /><path d="M3 12 L12 3 M8 22 L21 10" stroke="#444" strokeWidth="2" /></Ic>,
  <Ic key="h" c="w-[17px] h-[17px]"><rect x="2" y="2" width="20" height="20" stroke="#444" strokeWidth="2" /><path d="M22 2 H12 V12 H2 V22 H22Z" fill="#444" /></Ic>,
];

function StatusBar() {
  const tp = "h-[18px] flex items-center justify-center";
  const Sv = ({ d, w = "w-[14px]" }: { d: string; w?: string }) => <svg viewBox="0 0 14 14" className={`${w} h-[14px]`}><path d={d} fill="#3e3e3e" /></svg>;
  return (
    <div className="flex h-[56px] relative">
      <div className="w-[97px] ml-[4px] pt-[6px] flex flex-col">
        <div className="h-[20px] bg-[#dbc0c0] border border-t-[#7a7a7a] border-l-[#7a7a7a] border-b-[#f0f0f0] border-r-[#f0f0f0]" />
        <div className="h-[22px] mt-[2px] pl-[4px] bg-white border border-t-[#7a7a7a] border-l-[#7a7a7a] border-b-[#f0f0f0] border-r-[#f0f0f0] overflow-hidden whitespace-nowrap font-['Liberation_Mono'] text-[12px] leading-[19px] text-[#111111]">Array modifier</div>
      </div>
      <div className="ml-[3px] my-[2px] w-[2px] border-l border-[#666666] border-r-[#eeeeee] border-r" />
      <div className="ml-[4px] w-[1550px] flex flex-col text-[12px] text-[#4a4a4a]">
        <div className="mt-[10px] h-[16px] leading-[16px]">None Selected</div>
        <div className="mt-[9px] h-[16px] leading-[16px]">Click or click-and-drag to select objects</div>
      </div>
      <div className="w-[449px] pt-[8px] flex flex-col">
        <div className="flex items-center h-[18px]">
          <div className="w-[24px] flex justify-center"><Ic c="w-[18px] h-[18px]"><path d="M2 7 V2 H7 M17 2 H22 V7 M22 17 V22 H17 M7 22 H2 V17" stroke="#8e8e8e" strokeWidth="1.6" /><circle cx="12" cy="9" r="2.5" fill="#8e8e8e" /><path d="M7 17 L12 12 L17 17Z" fill="#8e8e8e" /></Ic></div>
          <div className="w-[24px] ml-[3px] flex justify-center"><Ic c="w-[18px] h-[18px]"><rect x="6" y="11" width="12" height="11" fill="#8e8e8e" /><path d="M8 11 V6 A4 4 0 0 1 16 6 V11" stroke="#8e8e8e" strokeWidth="2" /></Ic></div>
          <div className="w-[24px] ml-[3px] flex justify-center"><Ic c="w-[17px] h-[17px]"><rect x="2" y="2" width="20" height="20" stroke="#444" strokeWidth="2" /><path d="M12 4 L20 12 L12 20 L4 12Z" stroke="#444" strokeWidth="1.6" /><path d="M12 4 L12 20 M4 12 H20" stroke="#444" /></Ic></div>
          <span className="ml-[3px] w-[13px] text-[12px] text-[#4a4a4a]">X:</span><Field v="91,749mm" w="w-[59px]" />
          <span className="ml-[17px] w-[9px] text-[12px] text-[#4a4a4a]">Y:</span><Field v="143,339mm" w="w-[58px]" />
          <span className="ml-[17px] w-[8px] text-[12px] text-[#4a4a4a]">Z:</span><Field v="0,0mm" w="w-[58px]" />
          <span className="ml-[15px]"><Tx>Grid = 10,0mm</Tx></span>
        </div>
        <div className="mt-[6px] flex items-center h-[20px]">
          <div className="ml-[173px] w-px h-[20px] bg-[#666666]" />
          <div className="ml-[6px] w-[20px] h-[20px] bg-[#a8a8a8] rounded-[2px] flex items-center justify-center">
            <Ic c="w-[15px] h-[15px]"><path d="M12 1 L21 4 V12 C21 18 16 21 12 23 C8 21 3 18 3 12 V4Z" fill="#e4e4e4" stroke="#333" /><path d="M12 1 V12 H3 V4Z M12 12 H21 C21 18 16 21 12 23Z" fill="#333" /></Ic>
          </div>
          <span className="ml-[5px] w-[53px]"><Tx>Enabled:</Tx></span>
          <span className="w-[9px] h-[9px] rounded-full bg-[#41d84a]" />
          <div className="w-[20px] h-[20px] ml-[5px] bg-[#e8e8e8] rounded-[3px] flex items-center justify-center"><span className="w-[14px] h-[14px] rounded-full bg-white border-2 border-[#666666] flex items-center justify-center text-[9px] font-bold text-[#333333]">0</span></div>
          <div className="ml-[7px] w-px h-[20px] bg-[#777777]" />
          <div className="w-[30px] flex justify-center"><Ic c="w-[14px] h-[14px]"><path d="M12 1 L22 6 V18 L12 23 L2 18 V6Z M2 6 L12 11 L22 6 M12 11 V23" stroke="#555" strokeWidth="1.6" /></Ic></div>
          <Tx>Add Time Tag</Tx>
        </div>
      </div>
      <div className="w-[128px] pt-[8px] flex flex-col">
        <div className="flex items-center h-[18px]">
          <div className={`${tp} w-[21px]`}><Sv d="M1 1 H3 V13 H1Z M8 2 V12 L3 7Z M13 2 V12 L8 7Z" /></div>
          <div className="w-px h-[18px] bg-[#777777]" />
          <div className={`${tp} w-[24px]`}><Sv d="M7 2 V12 L2 7Z M8 1 H10 V13 H8Z M11 1 H13 V13 H11Z" /></div>
          <div className={`${tp} w-[22px]`}><Sv d="M2 0 L13 7 L2 14Z" w="w-[16px]" /></div>
          <div className={`${tp} w-[22px]`}><Sv d="M1 1 H3 V13 H1Z M4 1 H6 V13 H4Z M7 2 L12 7 L7 12Z" /></div>
          <div className="w-px h-[18px] bg-[#777777]" />
          <div className={`${tp} w-[24px]`}><Sv d="M1 2 L6 7 L1 12Z M6 2 L11 7 L6 12Z M11 1 H13 V13 H11Z" /></div>
        </div>
        <div className="mt-[4px] flex items-center h-[20px]">
          <div className={`${tp} w-[21px]`}><Sv d="M6 2 V12 L1 7Z M8 2 V12 L13 7Z" /></div>
          <div className="w-[71px] h-[18px] bg-[#a8a8a8] flex items-center justify-between pl-[4px] pr-[3px] text-[12px] text-[#4a4a4a] border-l border-[#777777]">0
            <svg viewBox="0 0 6 12" className="w-[5px] h-[10px]"><path d="M0 5 L3 1 L6 5Z M0 7 L3 11 L6 7Z" fill="#333" /></svg>
          </div>
          <div className={`${tp} w-[26px]`}><Ic c="w-[18px] h-[18px]"><circle cx="10" cy="9" r="8" fill="#444" /><path d="M10 4 V9 H14" stroke="#ddd" strokeWidth="1.4" /><circle cx="17" cy="18" r="4.4" stroke={O} strokeWidth="3" /></Ic></div>
        </div>
      </div>
      <div className="w-[42px] mt-[7px] h-[42px] bg-[#b0b0b0] border border-[#bebebe] rounded-[3px] flex items-center justify-center">
        <Ic c="w-[30px] h-[30px]"><path d="M9 2 H15 V9 H22 V15 H15 V22 H9 V15 H2 V9 H9Z" fill="#333" /><circle cx="19" cy="14" r="2.5" fill="#b0b0b0" stroke={T} strokeWidth="1.4" /><path d="M18 16 L13 23 M14 21 L16 22" stroke={T} strokeWidth="1.6" /></Ic>
      </div>
      <div className="ml-[5px] w-[46px] pt-[7px] flex flex-col gap-[6px] text-[11.5px] text-[#4a4a4a]">
        <div className="h-[16px] bg-[#b0b0b0] rounded-[2px] border border-[#bebebe] flex items-center justify-center whitespace-nowrap">Auto Key</div>
        <div className="h-[20px] bg-[#b0b0b0] rounded-[2px] border border-[#bebebe] flex items-center justify-center whitespace-nowrap">Set Key</div>
      </div>
      <div className="ml-[5px] w-[114px] pt-[7px] flex flex-col gap-[4px]">
        <div className="h-[19px] bg-[#a8a8a8] border border-[#b8b8b8] flex items-center justify-between pl-[5px] pr-[5px] text-[12px] text-[#4a4a4a]">Selected
          <svg viewBox="0 0 8 6" className="w-[7px] h-[5px]"><path d="M0 0 H8 L4 6Z" fill="#333" /></svg>
        </div>
        <div className="flex items-center h-[20px]">
          <div className="w-[26px] flex justify-center"><Ic c="w-[19px] h-[19px]"><rect x="9" y="1" width="6" height="4" stroke="#555" /><path d="M7 4 C2 8 3 16 3 22 M17 4 C22 8 21 16 21 22" stroke={T} strokeWidth="2" /></Ic></div>
          <div className="w-[88px] h-[20px] bg-[#a8a8a8] border border-[#bebebe] rounded-[2px] flex items-center justify-center text-[12px] text-[#4a4a4a]">Key Filters...</div>
        </div>
      </div>
      <div className="ml-[8px] w-[94px] pt-[8px] grid grid-cols-4 gap-y-[4px] justify-items-center h-[50px]">
        {nav.map((n, i) => <div key={i} className="h-[18px] flex items-center">{n}</div>)}
      </div>
    </div>
  );
}

function Taskbar() {
  return (
    <div className="flex items-center h-[47px] border-t border-[#4a5058] bg-[linear-gradient(90deg,#1c222c_0%,#1c222c_19%,#12235c_33%,#12235c_66%,#1c222c_70%,#1c222c_100%)] text-white text-[12px]">
      <div className="relative ml-[20px] w-[30px] h-[36px]">
        <svg viewBox="0 0 24 28" className="w-[24px] h-[28px] mt-[6px]"><ellipse cx="10" cy="5" rx="7" ry="3" fill="#e88a1a" /><ellipse cx="13" cy="11" rx="8" ry="3.5" fill="#f0951c" /><ellipse cx="10" cy="16" rx="8" ry="3.5" fill="#cf7a12" /><path d="M6 26 L10 21 L14 26Z" fill="#4aa02a" /></svg>
        <span className="absolute left-[11px] top-[1px] w-[16px] h-[21px] rounded-full bg-[#f7a3ae] flex items-center justify-center text-[11px] text-[#222222]">1</span>
      </div>
      <div className="flex flex-col leading-[16px]">
        <span>USD/INR</span>
        <span className="text-[#5fc24a]">+0.59%</span>
      </div>
      <div className="ml-[949px] w-[24px] grid grid-cols-2 gap-[1px]">
        <span className="h-[12px] bg-[#4ad8f8]" /><span className="h-[12px] bg-[#4ad8f8]" /><span className="h-[12px] bg-[#1ea8ee]" /><span className="h-[12px] bg-[#1ea8ee]" />
      </div>
      <div className="ml-[13px] w-[220px] h-[32px] rounded-full bg-[#343d68] border border-[#4b5478] flex items-center pl-[11px] relative overflow-hidden">
        <Search className="w-[17px] h-[17px] text-white" strokeWidth={2} />
        <span className="ml-[8px] text-[13px] text-[#e4e4e4]">Поиск</span>
        <svg viewBox="0 0 48 32" className="absolute right-[3px] top-0 w-[48px] h-[32px]"><path d="M6 26 C0 22 2 12 9 12 C10 4 22 2 26 6 C32 2 42 6 42 14 C48 16 48 26 42 28 C30 32 16 31 6 26Z" fill="#a8dcf0" /><path d="M14 4 L24 20 L34 4 M24 20 L20 28 M24 20 L28 28" stroke="#d8c8b8" strokeWidth="3" fill="none" /><path d="M14 4 L18 10 M34 4 L30 10" stroke="#444" strokeWidth="3" /></svg>
      </div>
      <div className="ml-[13px] w-[24px] h-[38px] relative">
        <span className="absolute left-[6px] top-[2px] w-[18px] h-[26px] bg-white rounded-[1px]" />
        <span className="absolute left-0 top-[11px] w-[17px] h-[27px] bg-gradient-to-b from-[#b8b8b8] to-[#333333] rounded-[1px]" />
      </div>
      <div className="ml-[15px] w-[34px] h-[40px] flex flex-col items-center">
        <div className="w-[25px] h-[33px] rounded-[50%] bg-white flex items-center justify-center">
          <svg viewBox="0 0 16 20" className="w-[13px] h-[18px]"><path d="M2 2 L8 10 L14 2 M8 10 V19" stroke="#f0282a" strokeWidth="3" fill="none" /></svg>
        </div>
        <span className="mt-[3px] w-[6px] h-[3px] rounded-full bg-[#8a8f9a]" />
      </div>
      <div className="ml-[13px] w-[24px] h-[32px] mb-[5px] rounded-[2px] relative overflow-hidden">
        <span className="absolute left-0 top-0 w-[14px] h-[8px] bg-[#c98a1a] rounded-t-[2px]" />
        <span className="absolute left-0 top-[4px] w-[24px] h-[28px] bg-[#f6c83d]" />
        <span className="absolute left-[5px] bottom-0 w-[15px] h-[11px] bg-[#1477d4] rounded-t-[2px]" />
      </div>
      <div className="ml-[13px] w-[39px] h-[39px] bg-[#2a3354] rounded-[3px] flex flex-col items-center pt-[3px]">
        <MaxIcon c="w-[21px] h-[27px]" />
        <span className="mt-[1px] w-[16px] h-[3px] rounded-full bg-[#4cc2ff]" />
      </div>
      <div className="ml-[4px] w-[42px] flex flex-col items-center h-[38px] justify-between">
        <svg viewBox="0 0 26 24" className="w-[26px] h-[24px] mt-[3px]"><path d="M1 24 V16 L9 9 V24Z M10 24 V10 L15 5 V24Z M17 24 V6 L25 0 V24Z" fill="#4a5be0" /><path d="M6 19 H14" stroke="#12235c" strokeWidth="2" /></svg>
        <span className="w-[6px] h-[3px] rounded-full bg-[#8a8f9a]" />
      </div>
      <div className="ml-auto flex items-center">
        <svg viewBox="0 0 12 8" className="w-[11px] h-[8px]"><path d="M1 7 L6 1 L11 7" stroke="#fff" strokeWidth="1.4" fill="none" /></svg>
        <span className="ml-[20px] text-[12px]">РУС</span>
        <svg viewBox="0 0 16 14" className="ml-[16px] w-[15px] h-[14px]"><path d="M1 5 Q8 -1 15 5 M3.5 8 Q8 4 12.5 8 M6 10.5 Q8 9 10 10.5" stroke="#fff" strokeWidth="1.3" fill="none" /><circle cx="8" cy="12.5" r="1.2" fill="#fff" /></svg>
        <svg viewBox="0 0 16 14" className="ml-[8px] w-[15px] h-[14px]"><path d="M1 5 H4 L8 1 V13 L4 9 H1Z" stroke="#fff" fill="none" /><path d="M10 4 Q12 7 10 10 M12 2 Q15 7 12 12" stroke="#fff" fill="none" /></svg>
        <div className="ml-[17px] mr-[19px] flex flex-col items-end leading-[16px] text-[12px]">
          <span>11:59</span>
          <span>07.07.2025</span>
        </div>
      </div>
    </div>
  );
}

const paths = [
  ["Additional Icons", "C:\\Users\\99\\AppData\\Local\\Autodesk\\3dsMax\\2024 - 64bit\\ENU\\usericons"],
  ["Additional Macros", "C:\\Users\\99\\AppData\\Local\\Autodesk\\3dsMax\\2024 - 64bit\\ENU\\usermacros"],
  ["Additional Scripts", "C:\\Users\\99\\AppData\\Local\\Autodesk\\3dsMax\\2024 - 64bit\\ENU\\scripts"],
  ["Additional Startup Scripts", "C:\\Users\\99\\AppData\\Local\\Autodesk\\3dsMax\\2024 - 64bit\\ENU\\scripts\\startup"],
  ["Additional Startup Templates", "C:\\Users\\99\\Documents\\3ds Max 2024\\startuptemplates"],
  ["Hardware Shaders Cache", "C:\\Users\\99\\AppData\\Local\\Autodesk\\3dsMax\\2024 - 64bit\\ENU\\en-US\\plugcfg"],
  ["Page File", "C:\\Users\\99\\AppData\\Local\\Autodesk\\3dsMax\\2024 - 64bit\\ENU\\temp"],
  ["Temp", "C:\\Users\\99\\AppData\\Local\\Autodesk\\3dsMax\\2024 - 64bit\\ENU\\temp"],
  ["User Settings", "C:\\Users\\99\\Autodesk\\3ds Max 2024\\User Settings"],
  ["User Tools", "C:\\Users\\99\\Autodesk\\3ds Max 2024\\User Tools"],
];

function Dialog() {
  return (
    <div className="absolute left-[737px] top-[525px] w-[679px] h-[378px] rounded-[8px] overflow-hidden bg-[#c6c6c6] shadow-[0_6px_24px_rgba(0,0,0,0.35)] flex flex-col">
      <div className="h-[30px] bg-[#f2f5fb] flex items-center text-[12px] text-[#1c1c1c]">
        <MaxIcon c="w-[14px] h-[18px] ml-[9px] mr-[7px]" />
        <span>Configure User and System Paths</span>
        <span className="ml-auto text-[13px] mr-[39px]">?</span>
        <svg viewBox="0 0 12 12" className="w-[11px] h-[11px] mr-[18px]"><path d="M0 0 L12 12 M12 0 L0 12" stroke="#222" /></svg>
      </div>
      <div className="flex items-end h-[22px] pl-[2px] border-b border-[#8a8a8a] text-[11px] text-[#4a4a4a]">
        <div className="w-[92px] h-[21px] -mb-px pt-[1px] bg-[#c6c6c6] border-x border-t border-[#e6e6e6] rounded-t-[2px] flex items-center justify-center">User and System</div>
        <div className="ml-px w-[98px] h-[20px] pt-[1px] bg-[#e4e4e4] border border-[#8a8a8a] rounded-t-[2px] flex items-center justify-center">3rd Party Plug-Ins</div>
      </div>
      <div className="flex pl-[16px] pt-[22px] flex-1">
        <div className="w-[565px] h-[203px] border border-[#808080] outline outline-1 -outline-offset-2 outline-[#f4f4f4] py-[3px] px-[2px] text-[10.6px] leading-[13px] text-[#4e4e4e]">
          {paths.map(([a, b], i) => (
            <div key={i} className={`flex h-[13px] whitespace-nowrap ${i === 1 ? "bg-[#0078d7] text-white" : ""}`}>
              <span className="w-[149px] pl-[1px] shrink-0 overflow-hidden">{a}</span>
              <span>{b}</span>
            </div>
          ))}
        </div>
        <div className="ml-[9px] mt-[1px] w-[78px] h-[22px] bg-[#a8a8a8] rounded-[2px] border border-[#b4b4b4] flex items-center justify-center text-[11px] text-[#4a4a4a]"><span><span className="underline">M</span>odify...</span></div>
      </div>
      <div className="flex justify-end gap-[8px] pr-[10px] pb-[13px] text-[11px] text-[#4a4a4a]">
        <div className="w-[79px] h-[21px] bg-[#a8a8a8] rounded-[2px] border border-[#b4b4b4] flex items-center justify-center">OK</div>
        <div className="w-[79px] h-[21px] bg-[#a8a8a8] rounded-[2px] border border-[#b4b4b4] flex items-center justify-center">Cancel</div>
      </div>
      <svg viewBox="0 0 8 8" className="absolute right-[1px] bottom-[1px] w-2 h-2"><path d="M6 0h2v2H6zM3 3h2v2H3zM6 3h2v2H6zM0 6h2v2H0zM3 6h2v2H3zM6 6h2v2H6z" fill="#8a8a8a" /></svg>
    </div>
  );
}

export default function App() {
  return (
    <div className="relative flex flex-col w-[2559px] h-[1439px] overflow-hidden bg-[#c6c6c6] font-['Roboto',sans-serif]">
      <TitleBar />
      <MenuBar />
      <Toolbar />
      <div className="flex h-[1192px]">
        <div className="flex-1 min-w-0">
          <Ribbon />
          <div className="h-[6px]" />
          <div className="flex">
            <Viewport />
            <CommandPanel />
          </div>
        </div>
        <RightBar />
      </div>
      <div className="relative">
        <TimeArea />
        <StatusBar />
      </div>
      <Taskbar />
      <Dialog />
    </div>
  );
}
